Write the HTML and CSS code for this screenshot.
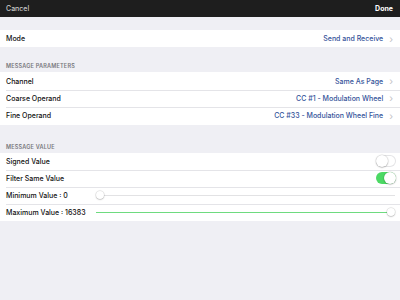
FILE: index.html
```html
<!doctype html>
<html lang="en">
<head>
  <meta charset="UTF-8">
  <title>Message settings</title>
  <link rel="stylesheet" href="styles.css">
</head>
<body>
  <div class="topbar">
    <span class="cancel">Cancel</span>
    <span class="done">Done</span>
  </div>

  <div class="group first">
    <div class="row">
      <span class="label">Mode</span>
      <span class="value">Send and Receive</span>
      <span class="chev">&#x203A;</span>
    </div>
  </div>

  <div class="header h1">MESSAGE PARAMETERS</div>
  <div class="group">
    <div class="row">
      <span class="label">Channel</span>
      <span class="value">Same As Page</span>
      <span class="chev">&#x203A;</span>
    </div>
    <div class="row sep">
      <span class="label">Coarse Operand</span>
      <span class="value">CC #1 - Modulation Wheel</span>
      <span class="chev">&#x203A;</span>
    </div>
    <div class="row sep">
      <span class="label">Fine Operand</span>
      <span class="value">CC #33 - Modulation Wheel Fine</span>
      <span class="chev">&#x203A;</span>
    </div>
  </div>

  <div class="header h2">MESSAGE VALUE</div>
  <div class="group">
    <div class="row tight">
      <span class="label">Signed Value</span>
      <span class="switch"><span class="knob"></span></span>
    </div>
    <div class="row tight sep">
      <span class="label">Filter Same Value</span>
      <span class="switch on"><span class="knob"></span></span>
    </div>
    <div class="row tight sep">
      <span class="label slabel">Minimum Value : 0</span>
      <div class="slider">
        <div class="track"></div>
        <span class="thumb" style="left: 0%"></span>
      </div>
    </div>
    <div class="row tight sep">
      <span class="label slabel">Maximum Value : 16383</span>
      <div class="slider">
        <div class="track"><div class="fill" style="width: 100%"></div></div>
        <span class="thumb" style="left: 100%"></span>
      </div>
    </div>
  </div>
</body>
</html>
```
FILE: styles.css
```css
body{
  margin: 0;
  background: #efeff4;
  font-family: Inter, "Liberation Sans", sans-serif;
  font-size: 7px;
  color: #111;
}

.topbar{
  height: 17px;
  background: #1e1e1e;
  display: flex;
  align-items: center;
  justify-content: space-between;
  padding: 0 7px 0 6px;
}
.cancel{
  color: #c8c8c8;
  font-weight: 500;
}
.done{
  color: #fff;
  font-weight: 700;
}

.group{
  background: #fff;
}
.group.first{
  margin-top: 13px;
}

.row{
  height: 17.4px;
  box-sizing: border-box;
  display: flex;
  align-items: center;
  padding: 0 7px 0 6px;
  position: relative;
}
.row.tight{
  height: 17px;
  padding-right: 4px;
}
.row.sep::before{
  content: "";
  position: absolute;
  top: 0;
  left: 6px;
  right: 0;
  border-top: 1px solid #e4e4e8;
}

.label{
  font-weight: 500;
  flex: 1;
}
.slabel{
  flex: 0 0 90px;
}
.value{
  color: #34539a;
  font-weight: 500;
}
.chev{
  color: #c2c2c6;
  font-size: 10px;
  margin-left: 6px;
  line-height: 1;
}

.header{
  font-size: 5.5px;
  color: #77777c;
  font-weight: 600;
  letter-spacing: 0.2px;
  padding: 0 6px 3px;
  display: flex;
  align-items: flex-end;
  box-sizing: border-box;
}
.h1{ height: 25px; }
.h2{ height: 28px; }

.switch{
  width: 20px;
  height: 12px;
  border-radius: 6px;
  background: #fff;
  box-shadow: inset 0 0 0 1px #e4e4e6;
  position: relative;
}
.switch .knob{
  position: absolute;
  left: 0;
  top: 0;
  width: 12px;
  height: 12px;
  border-radius: 50%;
  background: #fff;
  box-shadow: 0 0.5px 1.5px rgba(0,0,0,0.35), 0 0 0 0.5px rgba(0,0,0,0.08);
}
.switch.on{
  background: #4cd964;
  box-shadow: none;
}
.switch.on .knob{
  left: 8px;
}

.slider{
  flex: 1;
  position: relative;
  height: 10px;
  margin-right: 1px;
}
.track{
  position: absolute;
  left: 0;
  right: 0;
  top: 4.5px;
  height: 1px;
  background: #e2e2e4;
}
.fill{
  height: 1.5px;
  background: #6edb7f;
}
.thumb{
  position: absolute;
  top: 1px;
  width: 8px;
  height: 8px;
  margin-left: -4px;
  border-radius: 50%;
  background: #fff;
  box-shadow: 0 0.5px 1.5px rgba(0,0,0,0.3), 0 0 0 0.5px rgba(0,0,0,0.1);
}
.slider .thumb[style*="left: 0%"]{
  margin-left: 0;
}
.slider .thumb[style*="left: 100%"]{
  margin-left: -8px;
}
```
